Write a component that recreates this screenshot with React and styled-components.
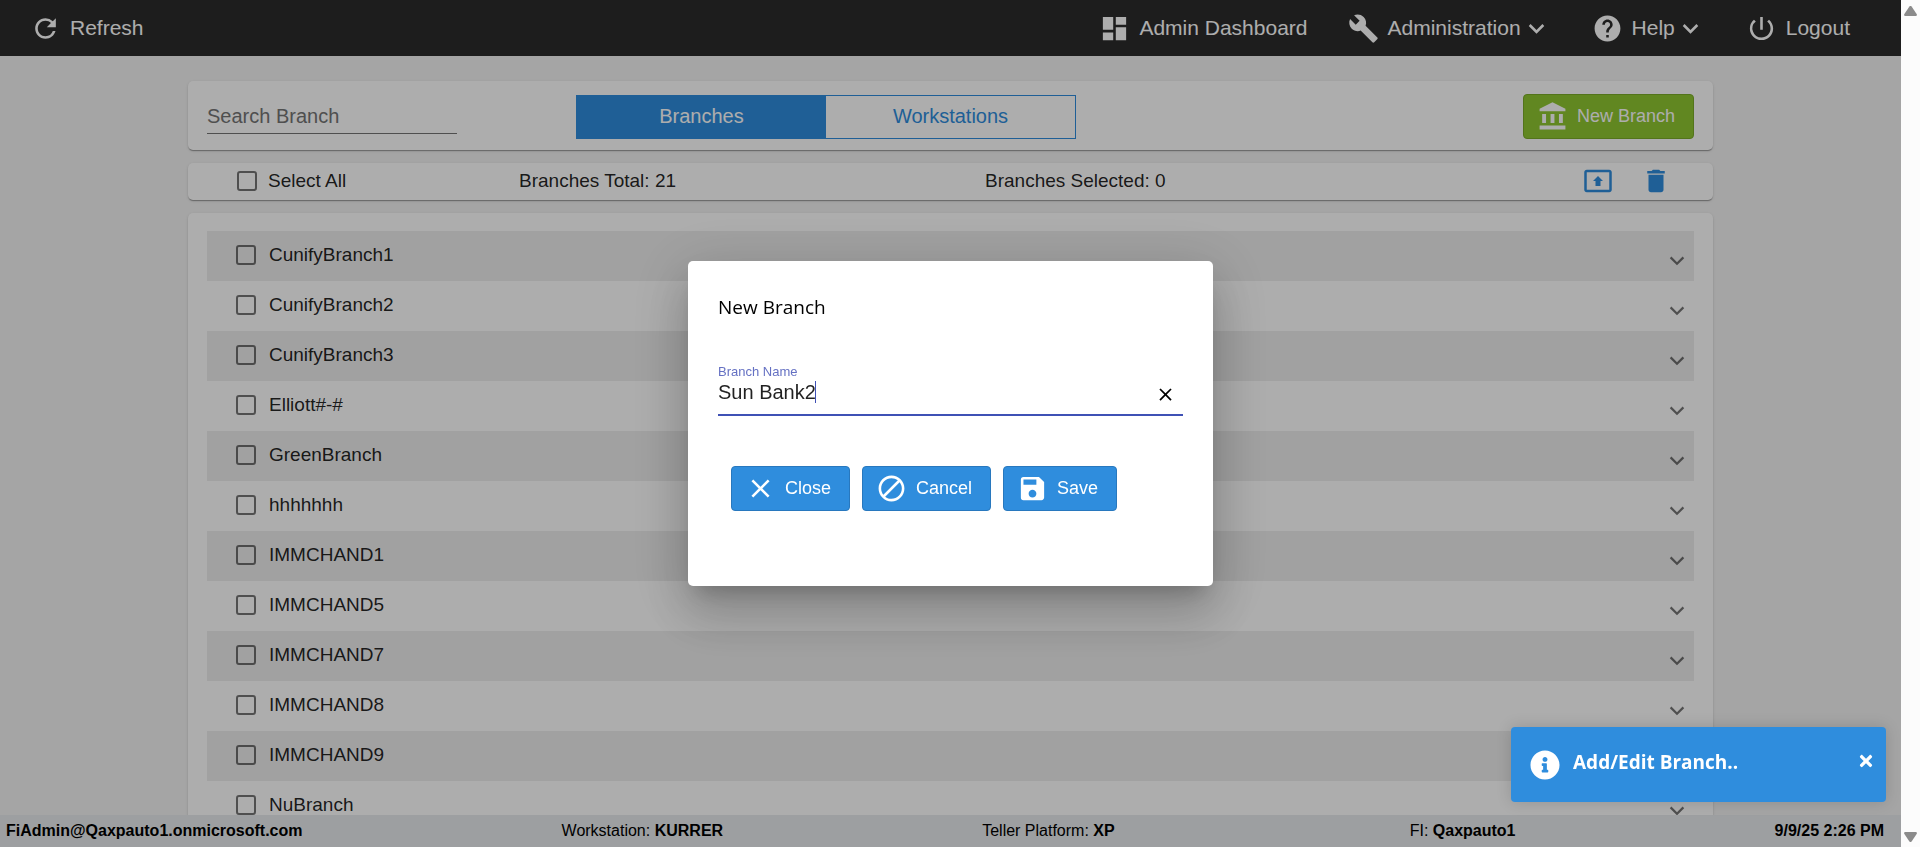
import React, { useState } from "react";
import styled, { createGlobalStyle } from "styled-components";
import {
  MdBuild,
  MdClose,
  MdAccountBalance,
  MdDashboard,
  MdDelete,
  MdDoNotDisturbAlt,
  MdExpandMore,
  MdHelp,
  MdPowerSettingsNew,
  MdPresentToAll,
  MdRefresh,
  MdSave,
} from "react-icons/md";
import { FaInfoCircle, FaTimes } from "react-icons/fa";

const GlobalStyle = createGlobalStyle`
  * {
    box-sizing: border-box;
  }
  body {
    margin: 0;
    background-color: #f3f3f3;
    color: rgba(0, 0, 0, 0.87);
    font-family: "Liberation Sans", Arial, sans-serif;
    font-size: 19px;
  }
  button,
  input {
    font-family: inherit;
  }
  button {
    cursor: pointer;
  }
`;

const Base = styled.div`
  display: flex;
  height: 100vh;
`;
const Screen = styled.div`
  flex: 1;
  min-width: 0;
  display: flex;
  flex-direction: column;
`;

/* header */
const Header = styled.header`
  flex: none;
  height: 56px;
  padding: 0 51px 0 30px;
  background-color: #2c2c2c;
  display: flex;
  align-items: center;
  justify-content: space-between;
`;
const Nav = styled.nav`
  display: flex;
  align-items: center;
  gap: 40px;
`;
const NavButton = styled.button`
  display: flex;
  align-items: center;
  padding: 0;
  border: none;
  background: none;
  color: #fff;
  font-size: 21px;
  line-height: 32px;
  white-space: nowrap;
  svg {
    flex: none;
  }
`;
const NavText = styled.span`
  margin-left: 9px;
`;

/* content */
const Main = styled.main`
  flex: 1;
  min-height: 0;
  overflow: hidden;
  padding: 25px 188px 0;
  display: flex;
  flex-direction: column;
  gap: 13px;
`;
const Card = styled.section`
  flex: none;
  border-radius: 5px;
  background-color: #fff;
  box-shadow: 0 2px 1px -1px rgba(0, 0, 0, 0.2), 0 1px 1px rgba(0, 0, 0, 0.14),
    0 1px 3px rgba(0, 0, 0, 0.12);
`;
const ToolCard = styled(Card)`
  display: flex;
  align-items: center;
  padding: 13px 19px 11px;
`;
const SearchInput = styled.input`
  width: 250px;
  height: 34px;
  margin-right: 119px;
  padding: 0;
  border: none;
  border-bottom: 1px solid rgba(0, 0, 0, 0.54);
  background: none;
  font-size: 20px;
  outline: none;
  &::placeholder {
    color: #757575;
    opacity: 1;
  }
`;
const Tabs = styled.div`
  display: flex;
  width: 500px;
  height: 44px;
  border: 1px solid #2f8ddd;
`;
const Tab = styled.button`
  flex: 1;
  border: none;
  background-color: ${(props) => (props.$active ? "#2f8ddd" : "transparent")};
  color: ${(props) => (props.$active ? "#fff" : "#2f8ddd")};
  font-size: 20px;
`;
const ActionButton = styled.button`
  display: flex;
  align-items: center;
  gap: 9px;
  height: 45px;
  padding: 0 18px 0 13px;
  border: 1px solid ${(props) => (props.$green ? "#7bac29" : "#2878be")};
  border-radius: 4px;
  background-color: ${(props) => (props.$green ? "#8fc732" : "#2f8ddd")};
  color: #fff;
  font-size: 18px;
  white-space: nowrap;
`;
const ToolEnd = styled.div`
  margin-left: auto;
`;

const SummaryCard = styled(Card)`
  display: flex;
  align-items: center;
  height: 37px;
  padding: 0 42px 1px 49px;
`;
const CheckLabel = styled.label`
  display: flex;
  align-items: center;
  gap: 11px;
  cursor: pointer;
`;
const CheckBox = styled.input`
  appearance: none;
  width: 20px;
  height: 20px;
  margin: 0;
  border: 2px solid rgba(0, 0, 0, 0.54);
  border-radius: 3px;
  cursor: pointer;
  &:checked {
    border-color: #2f8ddd;
    background-color: #2f8ddd;
  }
`;
const SelectAllCell = styled.div`
  width: 282px;
`;
const TotalCell = styled.div`
  width: 466px;
`;
const SummaryActions = styled.div`
  margin-left: auto;
  display: flex;
  gap: 28px;
`;
const IconButton = styled.button`
  display: flex;
  padding: 0;
  border: none;
  background: none;
  color: ${(props) => props.$color || "#2f8ddd"};
`;

const ListCard = styled(Card)`
  padding: 18px 19px;
`;
const BranchList = styled.ul`
  margin: 0;
  padding: 0;
  list-style: none;
`;
const BranchRow = styled.li`
  display: flex;
  justify-content: space-between;
  height: 50px;
  padding: 13px 9px 0 29px;
  &:nth-child(odd) {
    background-color: #ededed;
  }
`;
const RowLabel = styled(CheckLabel)`
  height: 22px;
  gap: 13px;
`;
const ExpandButton = styled(IconButton)`
  height: 22px;
  margin-top: 12px;
`;

/* footer */
const Footer = styled.footer`
  flex: none;
  height: 32px;
  padding: 0 17px 0 6px;
  background-color: #e8ebed;
  color: #000;
  font-size: 16px;
  display: flex;
  align-items: center;
  justify-content: space-between;
  white-space: nowrap;
`;
const Platform = styled.span`
  padding-right: 36px;
`;

const ScrollTrack = styled.div`
  flex: none;
  width: 19px;
  padding: 6px 0 5px;
  background-color: #fcfcfc;
  display: flex;
  flex-direction: column;
  align-items: center;
  justify-content: space-between;
`;

/* dialog */
const Backdrop = styled.div`
  position: fixed;
  inset: 0 19px 0 0;
  background-color: rgba(0, 0, 0, 0.32);
  display: flex;
  align-items: center;
  justify-content: center;
`;
const Dialog = styled.form`
  width: 525px;
  padding: 30px 30px 75px;
  border-radius: 5px;
  background-color: #fff;
  box-shadow: 0 14px 19px -9px rgba(0, 0, 0, 0.2),
    0 30px 48px 4px rgba(0, 0, 0, 0.14), 0 11px 58px 10px rgba(0, 0, 0, 0.12);
`;
const DialogTitle = styled.h1`
  margin: 0 0 40px;
  color: #000;
  font-family: "Open Sans", "Noto Sans", sans-serif;
  font-size: 19px;
  font-weight: 400;
  line-height: 33px;
`;
const Field = styled.div`
  position: relative;
  display: grid;
  grid-template-columns: 1fr 28px;
  padding-bottom: 9px;
  border-bottom: 2px solid #3f51b5;
`;
const FieldLabel = styled.label`
  grid-column: 1 / 3;
  color: #6571c3;
  font-size: 13px;
  line-height: 16px;
`;
const FieldInput = styled.input`
  min-width: 0;
  height: 25px;
  padding: 0;
  border: none;
  background: none;
  color: rgba(0, 0, 0, 0.87);
  caret-color: transparent;
  font-size: 20px;
  outline: none;
`;
const Caret = styled.span`
  position: absolute;
  top: 17px;
  left: 97px;
  width: 1px;
  height: 22px;
  background-color: #3f51b5;
`;
const ClearButton = styled(IconButton)`
  align-self: end;
`;
const DialogActions = styled.div`
  display: flex;
  gap: 12px;
  margin-top: 50px;
  padding-left: 13px;
`;

const Toast = styled.div`
  position: fixed;
  right: 34px;
  bottom: 45px;
  width: 375px;
  height: 75px;
  padding: 0 11px 0 19px;
  border-radius: 4px;
  background-color: #2f8ddd;
  box-shadow: 0 0 15px rgba(0, 0, 0, 0.15);
  color: #fff;
  display: flex;
  align-items: center;
`;
const ToastText = styled.strong`
  margin: 0 auto 6px 13px;
  font-family: "Open Sans", "Noto Sans", sans-serif;
  font-size: 19px;
  font-weight: 700;
`;
const ToastClose = styled(IconButton)`
  margin-bottom: 8px;
`;

const branchArr = [
  "CunifyBranch1",
  "CunifyBranch2",
  "CunifyBranch3",
  "Elliott#-#",
  "GreenBranch",
  "hhhhhhh",
  "IMMCHAND1",
  "IMMCHAND5",
  "IMMCHAND7",
  "IMMCHAND8",
  "IMMCHAND9",
  "NuBranch",
];

export default function App() {
  const [tab, setTab] = useState("Branches");
  const [branchName, setBranchName] = useState("Sun Bank2");
  const [showDialog, setShowDialog] = useState(true);
  const [showToast, setShowToast] = useState(true);

  const onCloseDialog = () => setShowDialog(false);
  const onSave = (e) => {
    e.preventDefault();
    setShowDialog(false);
  };

  return (
    <Base>
      <GlobalStyle />
      <Screen>
        <Header>
          <NavButton>
            <MdRefresh size={31} />
            <NavText>Refresh</NavText>
          </NavButton>
          <Nav>
            <NavButton>
              <MdDashboard size={31} />
              <NavText>Admin Dashboard</NavText>
            </NavButton>
            <NavButton>
              <MdBuild size={31} />
              <NavText>Administration</NavText>
              <MdExpandMore size={31} />
            </NavButton>
            <NavButton>
              <MdHelp size={31} />
              <NavText>Help</NavText>
              <MdExpandMore size={31} />
            </NavButton>
            <NavButton>
              <MdPowerSettingsNew size={31} />
              <NavText>Logout</NavText>
            </NavButton>
          </Nav>
        </Header>
        <Main>
          <ToolCard>
            <SearchInput placeholder="Search Branch" aria-label="Search Branch" />
            <Tabs>
              {["Branches", "Workstations"].map((name) => (
                <Tab
                  key={name}
                  $active={tab === name}
                  onClick={() => setTab(name)}
                >
                  {name}
                </Tab>
              ))}
            </Tabs>
            <ToolEnd>
              <ActionButton $green onClick={() => setShowDialog(true)}>
                <MdAccountBalance size={31} />
                New Branch
              </ActionButton>
            </ToolEnd>
          </ToolCard>
          <SummaryCard>
            <SelectAllCell>
              <CheckLabel>
                <CheckBox type="checkbox" />
                Select All
              </CheckLabel>
            </SelectAllCell>
            <TotalCell>Branches Total: 21</TotalCell>
            <div>Branches Selected: 0</div>
            <SummaryActions>
              <IconButton aria-label="Upload">
                <MdPresentToAll size={30} />
              </IconButton>
              <IconButton aria-label="Delete">
                <MdDelete size={30} />
              </IconButton>
            </SummaryActions>
          </SummaryCard>
          <ListCard>
            <BranchList>
              {branchArr.map((branch) => (
                <BranchRow key={branch}>
                  <RowLabel>
                    <CheckBox type="checkbox" />
                    {branch}
                  </RowLabel>
                  <ExpandButton
                    $color="rgba(0, 0, 0, 0.54)"
                    aria-label={`Expand ${branch}`}
                  >
                    <svg width="16" height="10" viewBox="0 0 16 10" fill="none">
                      <path
                        d="M1.6 1.4 8 7.8l6.4-6.4"
                        stroke="currentColor"
                        strokeWidth="2.2"
                      />
                    </svg>
                  </ExpandButton>
                </BranchRow>
              ))}
            </BranchList>
          </ListCard>
        </Main>
        <Footer>
          <b>FiAdmin@Qaxpauto1.onmicrosoft.com</b>
          <span>
            Workstation: <b>KURRER</b>
          </span>
          <Platform>
            Teller Platform: <b>XP</b>
          </Platform>
          <span>
            FI: <b>Qaxpauto1</b>
          </span>
          <b>9/9/25 2:26 PM</b>
        </Footer>
      </Screen>
      <ScrollTrack>
        <svg width="13" height="10" viewBox="0 0 13 10" fill="#8b8b8b">
          <path d="M5.4.6a1.4 1.4 0 0 1 2.2 0L12.8 8.2Q13.2 10 11.8 10H1.2Q-.2 10 .2 8.2z" />
        </svg>
        <svg width="13" height="10" viewBox="0 0 13 10" fill="#8b8b8b">
          <path d="M5.4 9.4a1.4 1.4 0 0 0 2.2 0L12.8 1.8Q13.2 0 11.8 0H1.2Q-.2 0 .2 1.8z" />
        </svg>
      </ScrollTrack>
      {showDialog && (
        <Backdrop>
          <Dialog onSubmit={onSave}>
            <DialogTitle>New Branch</DialogTitle>
            <Field>
              <FieldLabel htmlFor="branchName">Branch Name</FieldLabel>
              <FieldInput
                id="branchName"
                value={branchName}
                onChange={(e) => setBranchName(e.target.value)}
              />
              <Caret />
              <ClearButton
                type="button"
                $color="#000"
                aria-label="Clear"
                onClick={() => setBranchName("")}
              >
                <MdClose size={21} />
              </ClearButton>
            </Field>
            <DialogActions>
              <ActionButton type="button" onClick={onCloseDialog}>
                <MdClose size={31} />
                Close
              </ActionButton>
              <ActionButton type="button" onClick={onCloseDialog}>
                <MdDoNotDisturbAlt size={31} />
                Cancel
              </ActionButton>
              <ActionButton type="submit">
                <MdSave size={31} />
                Save
              </ActionButton>
            </DialogActions>
          </Dialog>
        </Backdrop>
      )}
      {showToast && (
        <Toast role="status">
          <FaInfoCircle size={30} />
          <ToastText>Add/Edit Branch..</ToastText>
          <ToastClose
            $color="#fff"
            aria-label="Dismiss"
            onClick={() => setShowToast(false)}
          >
            <FaTimes size={18} />
          </ToastClose>
        </Toast>
      )}
    </Base>
  );
}
